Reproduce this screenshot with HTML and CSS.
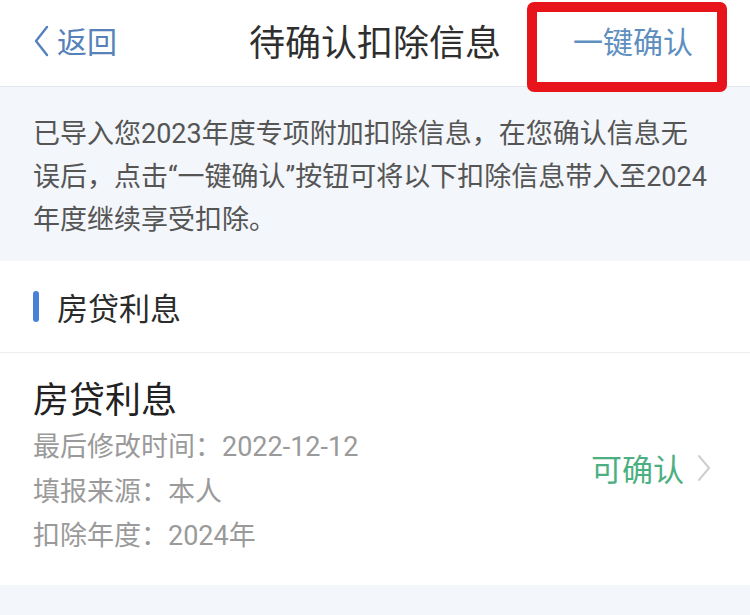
FILE: index.html
```html
<!DOCTYPE html>
<html lang="zh-CN">
<head>
  <meta charset="UTF-8" />
  <meta name="viewport" content="width=device-width, initial-scale=1" />
  <title>待确认扣除信息</title>
  <link rel="stylesheet" href="styles.css">
</head>
<body>
  <div class="topbar">
    <a class="back" href="#">
      <svg class="back-icon" viewBox="0 0 16 32" width="16" height="32">
        <path d="M14 2 L3 16 L14 30" fill="none" stroke="currentColor" stroke-width="2.4" stroke-linecap="round" stroke-linejoin="round"/>
      </svg>
      <span>返回</span>
    </a>
    <div class="title">待确认扣除信息</div>
    <a class="confirm-all" href="#">一键确认</a>
    <div class="highlight"></div>
  </div>

  <div class="notice">
    已导入您2023年度专项附加扣除信息，在您确认信息无<br>
    误后，点击“一键确认”按钮可将以下扣除信息带入至2024<br>
    年度继续享受扣除。
  </div>

  <div class="section-head">
    <span class="bar"></span>
    <span class="section-title">房贷利息</span>
  </div>

  <div class="item">
    <div class="item-info">
      <div class="item-title">房贷利息</div>
      <div class="item-line">最后修改时间：2022-12-12</div>
      <div class="item-line">填报来源：本人</div>
      <div class="item-line">扣除年度：2024年</div>
    </div>
    <div class="item-status">
      <span>可确认</span>
      <svg class="arrow" viewBox="0 0 16 28" width="16" height="28">
        <path d="M3 2 L13 14 L3 26" fill="none" stroke="currentColor" stroke-width="2" stroke-linecap="round" stroke-linejoin="round"/>
      </svg>
    </div>
  </div>

  <div class="footer-space"></div>
</body>
</html>
```

FILE: styles.css
```css
html, body {
  margin: 0;
  padding: 0;
  background: #f3f6fa;
  font-family: Roboto, "Noto Sans CJK SC", sans-serif;
  color: #333;
}

body {
  width: 750px;
  height: 615px;
  overflow: hidden;
}

a {
  text-decoration: none;
}

.topbar {
  position: relative;
  height: 87px;
  box-sizing: border-box;
  display: grid;
  grid-template-columns: 1fr auto 1fr;
  align-items: center;
  padding: 0 33px 6px 33px;
  background: #fff;
  border-bottom: 1px solid #e3e6ea;
}

.back {
  display: flex;
  align-items: center;
  gap: 8px;
  color: #5582bb;
  font-size: 30px;
  justify-self: start;
}

.back-icon {
  margin-top: 2px;
}

.title {
  font-size: 36px;
  color: #2f2f2f;
}

.confirm-all {
  justify-self: end;
  margin-right: 24px;
  color: #5f8fbf;
  font-size: 30px;
}

.highlight {
  position: absolute;
  left: 527px;
  top: 2px;
  width: 180px;
  height: 70px;
  border: 10px solid #e8141c;
  border-radius: 7px;
}

.notice {
  padding: 26px 33px 19px;
  font-size: 27px;
  line-height: 43px;
  color: #555;
  white-space: nowrap;
}

.section-head {
  display: flex;
  align-items: center;
  gap: 18px;
  height: 91px;
  padding: 0 33px;
  background: #fff;
  border-bottom: 1px solid #eceef1;
}

.bar {
  width: 6px;
  height: 31px;
  border-radius: 3px;
  background: #4a80d8;
}

.section-title {
  font-size: 31px;
  color: #2b2b2b;
}

.item {
  display: flex;
  align-items: center;
  justify-content: space-between;
  padding: 24px 38px 26px 33px;
  background: #fff;
}

.item-title {
  font-size: 36px;
  line-height: 48px;
  color: #222;
}

.item-line {
  font-size: 27px;
  line-height: 44.5px;
  color: #9a9a9a;
}

.item-status {
  display: flex;
  align-items: center;
  gap: 12px;
  color: #4caf82;
  font-size: 31px;
}

.arrow {
  color: #cfcfcf;
}

.footer-space {
  height: 30px;
}
```
